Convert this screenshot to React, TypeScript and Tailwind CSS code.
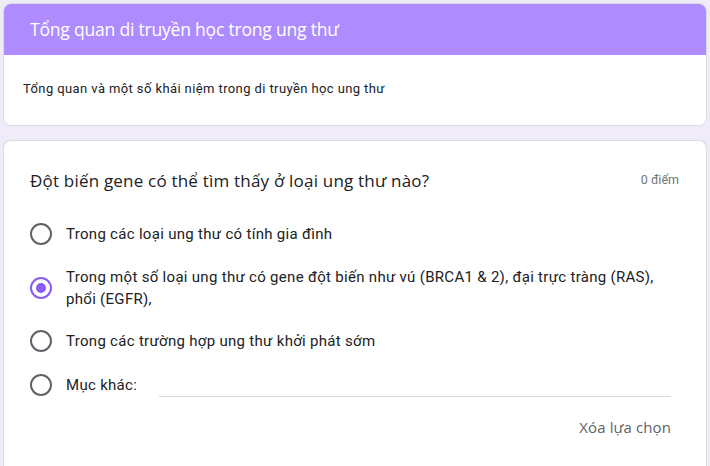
import React from 'react';

const options = [
  { label: 'Trong các loại ung thư có tính gia đình', checked: false },
  {
    label: 'Trong một số loại ung thư có gene đột biến như vú (BRCA1 & 2), đại trực tràng (RAS), phổi (EGFR),',
    checked: true,
  },
  { label: 'Trong các trường hợp ung thư khởi phát sớm', checked: false },
];

const Radio = ({ checked }: { checked: boolean }) => (
  <span
    className={
      checked
        ? 'flex size-[22px] shrink-0 items-center justify-center rounded-full border-2 border-[#8a5cf5]'
        : 'flex size-[22px] shrink-0 items-center justify-center rounded-full border-2 border-[#5f6368]'
    }
  >
    {checked && <span className="size-[10px] rounded-full bg-[#8a5cf5]" />}
  </span>
);

const App = () => {
  return (
    <div className="h-[466px] w-full overflow-hidden bg-[#f0ebf8] px-[3px] pt-[3px] font-['Roboto',sans-serif] text-[#202124]">
      {/* Header card */}
      <section className="overflow-hidden rounded-lg border border-[#dadce0] bg-white">
        <div className="flex h-[51px] items-center bg-[#ae8cff] px-[26px]">
          <h1 className="text-[17.5px] text-white font-['Open_Sans',sans-serif] tracking-[-0.2px]">
            Tổng quan di truyền học trong ung thư
          </h1>
        </div>
        <p className="px-[19px] pt-[26px] pb-[28px] text-[13px] leading-4 tracking-[0.4px]">
          Tổng quan và một số khái niệm trong di truyền học ung thư
        </p>
      </section>

      {/* Question card */}
      <section className="mt-[14px] min-h-[360px] rounded-t-lg border border-b-0 border-[#dadce0] bg-white pl-[26px] pr-[27px] pt-[28px]">
        <div className="flex items-start justify-between">
          <h2 className="text-[17px] leading-6 font-['Open_Sans',sans-serif] tracking-[0.2px]">
            Đột biến gene có thể tìm thấy ở loại ung thư nào?
          </h2>
          <span className="pt-[2px] text-[12.5px] text-[#70757a]">0 điểm</span>
        </div>

        <div className="mt-[30px] flex flex-col gap-[20.5px]">
          {options.map((o) => (
            <label key={o.label} className="flex items-center gap-[14px] pr-[8px]">
              <Radio checked={o.checked} />
              <span className="text-[15px] leading-[22px] tracking-[0.3px]">{o.label}</span>
            </label>
          ))}
          <label className="flex items-center gap-[14px] pr-[8px]">
            <Radio checked={false} />
            <span className="text-[15px] leading-[22px] tracking-[0.3px]">Mục khác:</span>
            <span className="ml-[8px] mt-[23px] h-px flex-1 bg-[#dadce0]" />
          </label>
        </div>

        <div className="mt-[19px] flex justify-end pr-[8px]">
          <button className="text-[15px] font-medium font-['Open_Sans',sans-serif] text-[#5f6368] tracking-[0.1px]">Xóa lựa chọn</button>
        </div>
      </section>
    </div>
  );
};

export default App;
